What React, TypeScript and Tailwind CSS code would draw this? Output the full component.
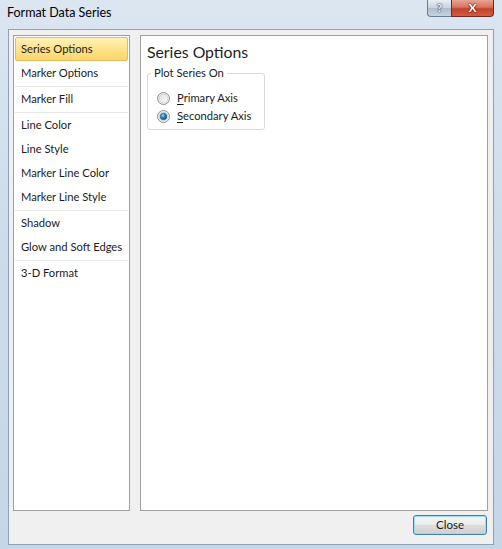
import React from "react";

const items: (string | null)[] = [
  "Series Options",
  "Marker Options",
  null,
  "Marker Fill",
  null,
  "Line Color",
  "Line Style",
  "Marker Line Color",
  "Marker Line Style",
  null,
  "Shadow",
  "Glow and Soft Edges",
  null,
  "3-D Format",
];

function Radio({ checked }: { checked: boolean }) {
  return (
    <svg width="13" height="13" viewBox="0 0 13 13" className="shrink-0">
      <defs>
        <linearGradient id={checked ? "rgA" : "rgB"} x1="0" y1="0" x2="1" y2="1">
          <stop offset="0" stopColor="#dcdcdc" />
          <stop offset="1" stopColor="#ffffff" />
        </linearGradient>
        <radialGradient id="dot" cx="0.4" cy="0.35" r="0.7">
          <stop offset="0" stopColor="#9fd8f6" />
          <stop offset="0.45" stopColor="#2b86c3" />
          <stop offset="1" stopColor="#0d3f6d" />
        </radialGradient>
      </defs>
      <circle cx="6.5" cy="6.5" r="6" fill="#f4f4f4" stroke="#8f8f8f" strokeWidth="1" />
      <circle cx="6.5" cy="6.5" r="4.5" fill={`url(#${checked ? "rgA" : "rgB"})`} stroke="#c8c8c8" strokeWidth="0.8" />
      {checked && <circle cx="6.5" cy="6.5" r="3.3" fill="url(#dot)" stroke="#1e4f7a" strokeWidth="0.5" />}
    </svg>
  );
}

export default function App() {
  return (
    <div
      className="relative w-[502px] h-[549px] overflow-hidden flex flex-col bg-[linear-gradient(180deg,#dbe6f1_0%,#cfdcea_40%,#c6d6e8_100%)]"
      style={{ fontFamily: 'Lato, "Noto Sans", sans-serif' }}
    >
      {/* title bar */}
      <div className="h-[29px] shrink-0 flex items-start relative">
        <div className="pl-[7px] pt-[5px] text-[12.5px] text-black leading-[16px] whitespace-nowrap">Format Data Series</div>
        <div className="absolute right-[8px] top-0 flex">
          <div className="w-[24px] h-[17px] rounded-bl-[4px] border border-[#6b7c91] border-t-0 border-r-0 bg-[linear-gradient(180deg,#e8eef5_0%,#c8d3df_50%,#aebccb_51%,#c7d3e0_100%)] flex items-center justify-center text-[12px] font-bold text-[#f4f7fa] [text-shadow:0_0_2px_#253446,0_0_1px_#253446]">
            ?
          </div>
          <div className="w-[43px] h-[17px] rounded-br-[4px] border border-[#6b2a24] border-t-0 bg-[linear-gradient(180deg,#e7a493_0%,#d7725f_45%,#c2432c_55%,#d45a3f_100%)] flex items-center justify-center text-[12px] font-bold text-white [text-shadow:0_0_2px_#3b0b05,0_0_1px_#3b0b05]">
            X
          </div>
        </div>
      </div>

      {/* client area */}
      <div className="mx-[8px] h-[516px] border border-[#8da2b8] bg-[#f0f0f0] flex flex-col">
        <div className="flex pl-[4px] pr-[5px] pt-[5px] gap-[10px]">
          {/* left list */}
          <div className="w-[117px] h-[476px] border border-[#a0a0a0] bg-white pt-[1px] px-[1px] flex flex-col">
            {items.map((it, i) =>
              it === null ? (
                <div key={i} className="h-[2px] flex flex-col justify-center">
                  <div className="h-px bg-[#e8e8e8]" />
                </div>
              ) : i === 0 ? (
                <div
                  key={i}
                  className="h-[24px] rounded-[2px] border border-[#e3bb5a] bg-[linear-gradient(180deg,#fff1b8_0%,#fde48f_45%,#fcd66b_100%)] flex items-center pl-[5px] text-[11.2px] text-[#1b1b1b] whitespace-nowrap"
                >
                  {it}
                </div>
              ) : (
                <div key={i} className="h-[24px] flex items-center pl-[6px] text-[11.2px] text-[#1b1b1b] whitespace-nowrap">
                  {it}
                </div>
              )
            )}
          </div>

          {/* right panel */}
          <div className="w-[348px] h-[476px] border border-[#a0a0a0] bg-white pl-[6px] pt-[5px]">
            <div className="text-[15.8px] leading-[22px] text-[#1e1e1e] whitespace-nowrap">Series Options</div>
            <fieldset className="mt-[3px] w-[118px] border border-[#d5dadf] rounded-[3px] pl-[9px] pt-[11px] pb-[6px]">
              <legend className="ml-[-6px] px-[3px] text-[11.2px] leading-[14px] text-[#1b1b1b] whitespace-nowrap">Plot Series On</legend>
              <div className="flex flex-col gap-[4px]">
                <div className="flex items-center gap-[7px] h-[14px]">
                  <Radio checked={false} />
                  <span className="text-[11.2px] text-[#1b1b1b] whitespace-nowrap">
                    <span className="underline underline-offset-2">P</span>rimary Axis
                  </span>
                </div>
                <div className="flex items-center gap-[7px] h-[14px]">
                  <Radio checked={true} />
                  <span className="text-[11.2px] text-[#1b1b1b] whitespace-nowrap">
                    <span className="underline underline-offset-2">S</span>econdary Axis
                  </span>
                </div>
              </div>
            </fieldset>
          </div>
        </div>

        <div className="flex justify-end pr-[6px] pt-[4px]">
          <button className="w-[74px] h-[20px] rounded-[3px] border border-[#3c7fb1] bg-[linear-gradient(180deg,#f4f4f4_0%,#ebebeb_50%,#dddddd_51%,#cfcfcf_100%)] shadow-[inset_0_0_0_1px_#9edcf6] text-[11.5px] text-[#1b1b1b] flex items-center justify-center">
            Close
          </button>
        </div>
      </div>
    </div>
  );
}
